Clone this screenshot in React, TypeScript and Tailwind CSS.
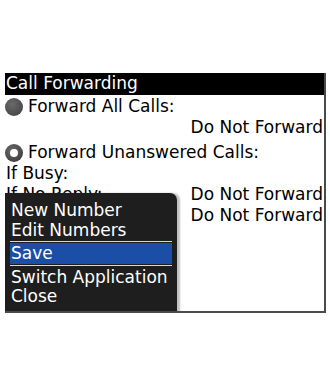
import React from 'react';

const font = { fontFamily: '"DejaVu Sans", "Liberation Sans", sans-serif' };

const FilledRadio: React.FC = () => (
  <span className="inline-block w-[18px] h-[18px] rounded-full bg-[radial-gradient(circle_at_40%_35%,#6a6a6a,#3c3c3c)] shrink-0" />
);

const SelectedRadio: React.FC = () => (
  <span className="flex items-center justify-center w-[18px] h-[18px] rounded-full bg-[radial-gradient(circle_at_40%_35%,#6a6a6a,#333)] shrink-0">
    <span className="w-[8px] h-[8px] rounded-full bg-white" />
  </span>
);

const App: React.FC = () => {
  const menuItems = ['New Number', 'Edit Numbers'];

  return (
    <div className="w-[330px] h-[385px] bg-white pt-[73px] pl-[5px] text-[17px] text-black" style={font}>
      <div className="relative w-[321px] h-[240px] bg-white border-r-2 border-b-2 border-[#4a4a4a] overflow-hidden">
        {/* title bar */}
        <div className="h-[22px] bg-black text-white leading-[20px] pl-[1px]">Call Forwarding</div>

        <div className="leading-[21px]">
          <div className="flex items-center gap-[5px] mt-[1px]">
            <FilledRadio />
            <span>Forward All Calls:</span>
          </div>
          <div className="text-right pr-[1px]">Do Not Forward</div>

          <div className="flex items-center gap-[5px] mt-[4px]">
            <SelectedRadio />
            <span>Forward Unanswered Calls:</span>
          </div>
          <div className="pl-[1px]">If Busy:</div>
          <div className="flex justify-between pl-[1px] pr-[1px]">
            <span>If No Reply:</span>
            <span>Do Not Forward</span>
          </div>
          <div className="flex justify-between pl-[1px] pr-[1px]">
            <span>If Not Reachable:</span>
            <span>Do Not Forward</span>
          </div>
        </div>

        {/* context menu */}
        <div className="absolute left-0 top-[120px] w-[172px] h-[120px] bg-[#1e1e1e] rounded-tr-[7px] text-white shadow-[3px_0_2px_rgba(0,0,0,0.25)] pt-[7px]">
          <div className="leading-[20px]">
            {menuItems.map((item) => (
              <div key={item} className="pl-[6px]">{item}</div>
            ))}
          </div>
          <div className="mx-[5px] mt-[1px] border-t border-[#d8d8d8]" />
          <div className="mx-[5px] mt-[1px] h-[21px] leading-[21px] bg-[#1b4ea6] pl-[1px]">Save</div>
          <div className="mx-[5px] mt-[1px] border-t border-[#d8d8d8]" />
          <div className="leading-[19px] mt-[2px]">
            <div className="pl-[6px]">Switch Application</div>
            <div className="pl-[6px]">Close</div>
          </div>
        </div>
      </div>
    </div>
  );
};

export default App;
